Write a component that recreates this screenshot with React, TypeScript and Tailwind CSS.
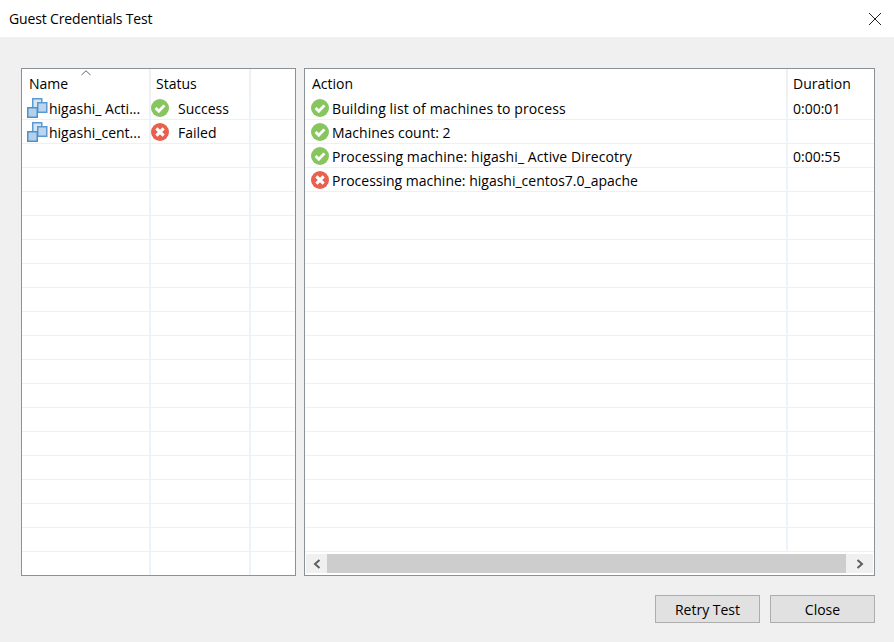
import React from 'react';

type RowStatus = 'ok' | 'fail';

const ROW_COUNT = 20;

const machines: { name: string; status: RowStatus; label: string }[] = [
  { name: 'higashi_ Acti...', status: 'ok', label: 'Success' },
  { name: 'higashi_cent...', status: 'fail', label: 'Failed' },
];

const actions: { text: string; status: RowStatus; duration: string; spacing: string }[] = [
  { text: 'Building list of machines to process', status: 'ok', duration: '0:00:01', spacing: 'tracking-[0.11px]' },
  { text: 'Machines count: 2', status: 'ok', duration: '', spacing: '' },
  { text: 'Processing machine: higashi_ Active Direcotry', status: 'ok', duration: '0:00:55', spacing: 'tracking-[0.09px]' },
  { text: 'Processing machine: higashi_centos7.0_apache', status: 'fail', duration: '', spacing: '' },
];

function StatusIcon({ status }: { status: RowStatus }) {
  if (status === 'ok') {
    return (
      <svg width="18" height="18" viewBox="0 0 18 18" className="shrink-0">
        <circle cx="9" cy="9" r="9" fill="#88c55f" />
        <path d="M4.6 9 L7.8 12.2 L13.4 6.4" fill="none" stroke="#fff" strokeWidth="2.8" />
      </svg>
    );
  }
  return (
    <svg width="18" height="18" viewBox="0 0 18 18" className="shrink-0">
      <circle cx="9" cy="9" r="9" fill="#e9604f" />
      <path d="M5.4 5.4 L12.6 12.6 M12.6 5.4 L5.4 12.6" fill="none" stroke="#fff" strokeWidth="3.2" />
    </svg>
  );
}

function MachineIcon() {
  return (
    <svg width="21" height="20" viewBox="0 0 21 20" className="shrink-0">
      <rect x="5.75" y="0.75" width="9" height="9" fill="#d6e6f5" stroke="#5a9ad0" strokeWidth="1.5" />
      <rect x="10.75" y="4.75" width="9" height="9.5" fill="#bcd5ec" stroke="#5a9ad0" strokeWidth="1.5" />
      <rect x="0.75" y="9.75" width="9.5" height="9.5" fill="#b4d0ea" stroke="#4f90c8" strokeWidth="1.5" />
    </svg>
  );
}

export default function App() {
  return (
    <div className="flex h-[642px] w-[894px] flex-col overflow-hidden bg-[#f0f0f0] font-['Open_Sans',sans-serif] text-[14px] text-black">
      {/* title bar */}
      <div className="flex h-[37px] items-center justify-between bg-white pl-[9px] pr-[12px]">
        <span className="tracking-[-0.15px]">Guest Credentials Test</span>
        <svg width="14" height="14" viewBox="0 0 14 14">
          <path d="M1 1 L13 13 M13 1 L1 13" stroke="#222" strokeWidth="1" fill="none" />
        </svg>
      </div>

      <div className="box-content flex h-[508px] gap-[8px] pl-[21px] pt-[31px]">
        {/* machines list */}
        <div className="flex h-[508px] w-[275px] flex-col overflow-hidden border border-[#8b9199] bg-white">
          <div className="relative flex h-[28px] shrink-0">
            <div className="h-full w-[129px] border-r-2 border-[#f0f0f0] pl-[7px] pt-[4px]">Name</div>
            <div className="h-full w-[100px] border-r-2 border-[#f0f0f0] pl-[5px] pt-[4px]">Status</div>
            <svg width="10" height="6" viewBox="0 0 10 6" className="absolute left-[59px] top-[1px]">
              <path d="M0.5 5 L5 0.8 L9.5 5" fill="none" stroke="#666" />
            </svg>
          </div>
          {Array.from({ length: ROW_COUNT }).map((_, i) => {
            const m = machines[i];
            return (
              <div key={i} className={`flex shrink-0 border-b border-[#f0f0f0] ${i === 0 ? 'h-[23px]' : 'h-[24px]'}`}>
                <div className={`flex w-[129px] items-center overflow-hidden whitespace-nowrap border-r-2 border-[#edf3fa] pl-[5px] ${i === 0 ? '' : 'pt-[1px]'}`}>
                  {m && <MachineIcon />}
                  {m && <span className="ml-[1px]">{m.name}</span>}
                </div>
                <div className={`flex w-[100px] items-center border-r-2 border-[#edf3fa] ${i === 0 ? '' : 'pt-[1px]'}`}>
                  {m && <StatusIcon status={m.status} />}
                  {m && <span className="ml-[9px]">{m.label}</span>}
                </div>
              </div>
            );
          })}
        </div>

        {/* actions list */}
        <div className="flex h-[508px] w-[571px] flex-col border border-[#8b9199] bg-white">
          <div className="flex h-[28px] shrink-0">
            <div className="h-full w-[483px] border-r-2 border-[#f0f0f0] pl-[7px] pt-[4px]">Action</div>
            <div className="h-full flex-1 pl-[5px] pt-[4px]">Duration</div>
          </div>
          <div className="min-h-0 flex-1 overflow-hidden">
            {Array.from({ length: ROW_COUNT - 1 }).map((_, i) => {
              const a = actions[i];
              return (
                <div key={i} className={`flex shrink-0 border-b border-[#f0f0f0] ${i === 0 ? 'h-[23px]' : 'h-[24px]'}`}>
                  <div className={`flex w-[483px] items-center whitespace-nowrap border-r-2 border-[#edf3fa] pl-[6px] ${i === 0 ? '' : 'pt-[1px]'}`}>
                    {a && <StatusIcon status={a.status} />}
                    {a && <span className={`ml-[3px] ${a.spacing}`}>{a.text}</span>}
                  </div>
                  <div className={`flex flex-1 items-center pl-[5px] ${i === 0 ? '' : 'pt-[1px]'}`}>{a?.duration}</div>
                </div>
              );
            })}
          </div>
          {/* horizontal scrollbar */}
          <div className="mx-[1px] mb-[2px] flex h-[19px] shrink-0 bg-[#f0f0f0]">
            <div className="flex w-[21px] items-center justify-center">
              <svg width="8" height="10" viewBox="0 0 8 10">
                <path d="M6.5 1 L2 5 L6.5 9" fill="none" stroke="#606060" strokeWidth="2" />
              </svg>
            </div>
            <div className="w-[519px] bg-[#cdcdcd]" />
            <div className="flex flex-1 items-center justify-center">
              <svg width="8" height="10" viewBox="0 0 8 10">
                <path d="M1.5 1 L6 5 L1.5 9" fill="none" stroke="#606060" strokeWidth="2" />
              </svg>
            </div>
          </div>
        </div>
      </div>

      {/* footer buttons */}
      <div className="flex justify-end gap-[10px] pr-[19px] pt-[19px]">
        <button className="h-[28px] w-[105px] border border-[#adadad] bg-[#e1e1e1]">Retry Test</button>
        <button className="h-[28px] w-[105px] border border-[#adadad] bg-[#e1e1e1]">Close</button>
      </div>
    </div>
  );
}
